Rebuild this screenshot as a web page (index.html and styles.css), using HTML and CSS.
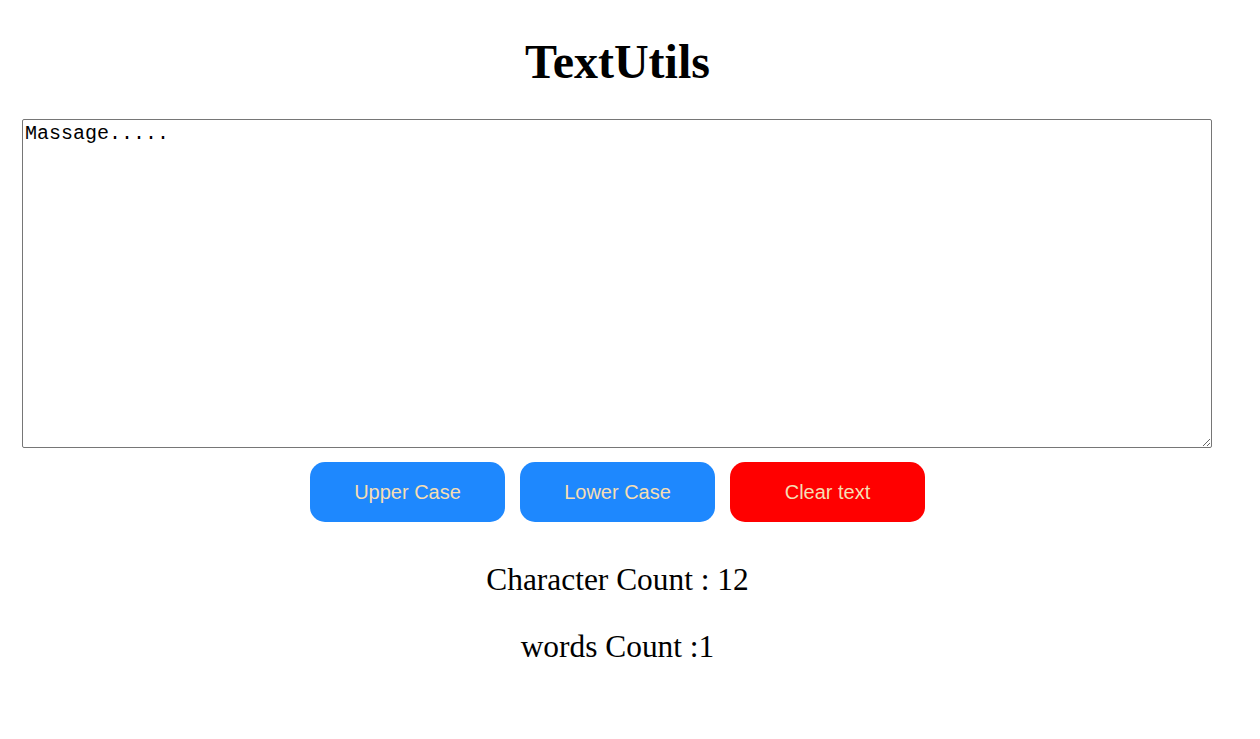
FILE: index.html
```html
<!DOCTYPE html>
<html lang="en">
<head>
<meta charset="utf-8">
<title>TextUtils</title>
<link rel="stylesheet" href="styles.css">
</head>
<body>
<main class="app">
  <h1 class="title">TextUtils</h1>
  <textarea class="message" placeholder="Enter text">Massage.....</textarea>
  <div class="actions">
    <button class="btn btn-blue">Upper Case</button>
    <button class="btn btn-blue">Lower Case</button>
    <button class="btn btn-red">Clear text</button>
  </div>
  <p class="count">Character Count : 12</p>
  <p class="count">words Count :1</p>
</main>
</body>
</html>
```

FILE: styles.css
```css
html, body {
  background: #ffffff;
}
body {
  margin: 8px;
  font-family: "Liberation Serif", "Times New Roman", serif;
  color: #000;
}
.app {
  width: 1219px;
  display: flex;
  flex-direction: column;
  align-items: center;
}
.title {
  font-size: 48px;
  font-weight: bold;
  margin: 26px 0 30px;
  line-height: 55px;
}
.message {
  display: block;
  align-self: flex-start;
  box-sizing: border-box;
  width: 1190px;
  height: 329px;
  margin: 0 0 0 14px;
  padding: 2px;
  font-family: "Liberation Mono", "Courier New", monospace;
  font-size: 20px;
  color: #000;
  border: 1px solid #767676;
  border-radius: 2px;
}
.actions {
  display: flex;
  gap: 15px;
  margin-top: 14px;
}
.btn {
  width: 195px;
  height: 60px;
  border: none;
  border-radius: 15px;
  font-family: "Liberation Sans", Arial, sans-serif;
  font-size: 20px;
  color: #f5deb3;
  cursor: pointer;
}
.btn-blue {
  background: #1e88fe;
}
.btn-red {
  background: #ff0000;
}
.count {
  font-size: 31.4px;
  line-height: 37px;
  margin: 39px 0 0;
}
.count + .count {
  margin-top: 30px;
}
```
